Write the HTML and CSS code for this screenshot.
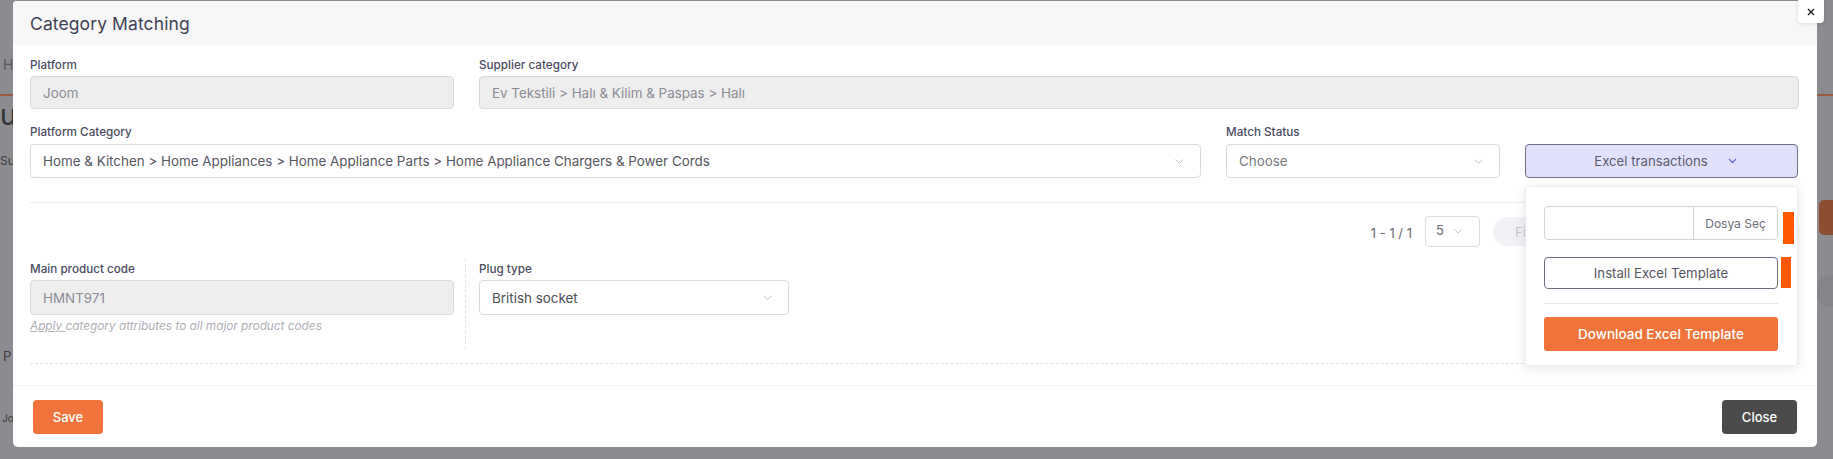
FILE: index.html
```html
<!DOCTYPE html>
<html lang="en">
<head>
<meta charset="utf-8">
<title>Category Matching</title>
<link rel="stylesheet" href="styles.css">
</head>
<body>
<div class="page-behind">
  <div class="pb-tabline"></div>
  <span class="pb-h">H</span>
  <span class="pb-up">up</span>
  <span class="pb-su">Su</span>
  <span class="pb-p">P</span>
  <span class="pb-jo">Jo</span>
  <div class="pb-block"></div>
  <div class="pb-circle"></div>
</div>

<div class="modal">
  <button class="modal-x" type="button" aria-label="close">
    <svg width="8" height="8" viewBox="0 0 8 8"><path d="M1 1L7 7M7 1L1 7" stroke="#222" stroke-width="1.4" fill="none"/></svg>
  </button>
  <div class="modal-header">
    <h2 class="modal-title">Category Matching</h2>
  </div>

  <div class="modal-body">
    <div class="row row-1">
      <div class="field">
        <label class="lbl">Platform</label>
        <div class="input disabled">Joom</div>
      </div>
      <div class="field">
        <label class="lbl">Supplier category</label>
        <div class="input disabled">Ev Tekstili &gt; Halı &amp; Kilim &amp; Paspas &gt; Halı</div>
      </div>
    </div>

    <div class="row row-2">
      <div class="field">
        <label class="lbl">Platform Category</label>
        <div class="input select">
          <span>Home &amp; Kitchen &gt; Home Appliances &gt; Home Appliance Parts &gt; Home Appliance Chargers &amp; Power Cords</span>
          <svg class="chev" width="9" height="5" viewBox="0 0 9 5"><path d="M0.5 0.5L4.5 4.5L8.5 0.5" stroke="#c4c4cc" stroke-width="1" fill="none"/></svg>
        </div>
      </div>
      <div class="field">
        <label class="lbl">Match Status</label>
        <div class="input select">
          <span>Choose</span>
          <svg class="chev" width="9" height="5" viewBox="0 0 9 5"><path d="M0.5 0.5L4.5 4.5L8.5 0.5" stroke="#c4c4cc" stroke-width="1" fill="none"/></svg>
        </div>
      </div>
      <div class="field excel-wrap">
        <label class="lbl">&nbsp;</label>
        <button class="excel-btn" type="button">
          <span>Excel transactions</span>
          <svg width="9" height="6" viewBox="0 0 9 6"><path d="M1 1L4.5 4.5L8 1" stroke="#6a6ad8" stroke-width="1.3" fill="none"/></svg>
        </button>
        <div class="excel-menu">
          <div class="menu-row">
            <div class="file-input">
              <span class="file-name"></span>
              <span class="file-btn">Dosya Seç</span>
            </div>
            <span class="orange-bar bar-1"></span>
          </div>
          <div class="menu-row row-gap">
            <button class="install-btn" type="button">Install Excel Template</button>
            <span class="orange-bar bar-2"></span>
          </div>
          <div class="menu-sep"></div>
          <button class="download-btn" type="button">Download Excel Template</button>
        </div>
      </div>
    </div>

    <div class="hr"></div>

    <div class="pager">
      <span class="pager-info">1 - 1 / 1</span>
      <div class="pager-size">
        <span>5</span>
        <svg width="8" height="5" viewBox="0 0 8 5"><path d="M0.5 0.5L4 4L7.5 0.5" stroke="#c4c4cc" stroke-width="1" fill="none"/></svg>
      </div>
      <span class="pager-pill">Filter</span>
      <span class="pager-pill pill-2">Search</span>
    </div>

    <div class="row row-3">
      <div class="col col-main">
        <label class="lbl">Main product code</label>
        <div class="input disabled">HMNT971</div>
        <p class="hint"><u>Apply </u>category attributes to all major product codes</p>
      </div>
      <div class="col col-attr">
        <label class="lbl">Plug type</label>
        <div class="input select plug">
          <span class="dark">British socket</span>
          <svg class="chev" width="9" height="5" viewBox="0 0 9 5"><path d="M0.5 0.5L4.5 4.5L8.5 0.5" stroke="#c4c4cc" stroke-width="1" fill="none"/></svg>
        </div>
      </div>
    </div>

    <div class="dashed-hr"></div>
  </div>

  <div class="modal-footer">
    <button class="btn btn-save" type="button">Save</button>
    <button class="btn btn-close" type="button">Close</button>
  </div>
</div>
</body>
</html>
```

FILE: styles.css
```css
* { box-sizing: border-box; }

html, body {
  margin: 0;
  padding: 0;
}

body {
  width: 1833px;
  height: 459px;
  overflow: hidden;
  background: #8a8c90;
  font-family: "Inter", "Open Sans", sans-serif;
  position: relative;
}

/* page behind the overlay */
.page-behind {
  position: absolute;
  inset: 0;
  color: #3c3d40;
}
.pb-tabline {
  position: absolute;
  left: 0; right: 0; top: 94px;
  height: 2px;
  background: #9c5a3c;
}
.pb-h { position: absolute; left: 3px; top: 56px; font-size: 14px; color: #55575b; }
.pb-up { position: absolute; left: 0; top: 98px; font-size: 28px; color: #303134; }
.pb-su { position: absolute; left: 0; top: 153px; font-size: 12px; color: #3a3b3e; }
.pb-p { position: absolute; left: 3px; top: 348px; font-size: 13px; color: #3a3b3e; }
.pb-jo { position: absolute; left: 2px; top: 412px; font-size: 10px; color: #3a3b3e; }
.pb-block {
  position: absolute;
  left: 1819px; top: 200px;
  width: 14px; height: 35px;
  border-radius: 5px 0 0 5px;
  background: #8c4e33;
}
.pb-circle {
  position: absolute;
  left: 1815px; top: 275px;
  width: 32px; height: 32px;
  border-radius: 50%;
  background: #838589;
}

/* modal */
.modal {
  position: absolute;
  left: 13px;
  top: 1px;
  width: 1804px;
  height: 446px;
  background: #fff;
  border-radius: 4px 4px 5px 5px;
  display: flex;
  flex-direction: column;
}

.modal-x {
  position: absolute;
  right: -7px;
  top: -1px;
  width: 26px;
  height: 23px;
  border: 0;
  padding: 0;
  background: #fff;
  border-radius: 0 0 4px 4px;
  box-shadow: 0 1px 4px rgba(0,0,0,0.12);
  display: flex;
  align-items: center;
  justify-content: center;
  z-index: 5;
}

.modal-header {
  height: 44px;
  flex: none;
  background: #f7f7f7;
  border-radius: 4px 4px 0 0;
  display: flex;
  align-items: center;
  padding-left: 17px;
}
.modal-title {
  margin: 0;
  font-size: 17.5px;
  font-weight: 400;
  color: #3f4156;
  letter-spacing: 0.1px;
}

.modal-body {
  flex: 1;
  padding: 12px 18px 0 17px;
}

.row { display: grid; }
.row-1 { grid-template-columns: 424px 1fr; column-gap: 25px; }
.row-2 { grid-template-columns: 1171px 274px 273px; column-gap: 25px; margin-top: 15px; }

.field { display: flex; flex-direction: column; }

.lbl {
  display: block;
  font-size: 11.7px;
  font-weight: 500;
  line-height: 16px;
  color: #4a4b5f;
  margin-bottom: 3px;
}
.row-2 .lbl { margin-bottom: 4px; }

.input {
  height: 33px;
  border: 1px solid #dadae2;
  border-radius: 4px;
  display: flex;
  align-items: center;
  padding: 0 12px;
  font-size: 13.4px;
  color: #6b6b74;
  background: #fff;
  white-space: nowrap;
}
.input.disabled {
  background: #eeeeee;
  color: #8b8b94;
}
.row-2 .input { height: 34px; }
.input.select { justify-content: space-between; color: #56565f; }
.input.select .chev { flex: none; margin-right: 4px; }
.row-2 .field:nth-child(2) .input { color: #7a7a82; }

/* excel dropdown */
.excel-wrap { position: relative; }
.excel-btn {
  height: 34px;
  border: 1px solid #6f6f82;
  border-radius: 4px;
  background: #e2e1fb;
  display: flex;
  align-items: center;
  justify-content: center;
  gap: 20px;
  font-family: inherit;
  font-size: 13.2px;
  color: #5c5c6e;
  padding: 0 0 0 8px;
}

.excel-menu {
  position: absolute;
  left: 0;
  top: 62px;
  width: 273px;
  height: 180px;
  background: #fff;
  border: 1px solid #ededf0;
  border-radius: 4px;
  box-shadow: 0 2px 12px rgba(0,0,0,0.10);
  padding: 19px 19px 18px 18px;
  z-index: 4;
}
.menu-row { display: flex; align-items: flex-start; }
.row-gap { margin-top: 13px; }

.file-input {
  width: 234px;
  height: 34px;
  flex: none;
  border: 1px solid #d3d3dc;
  border-radius: 4px;
  display: flex;
}
.file-name { flex: 1; }
.file-btn {
  width: 84px;
  border-left: 1px solid #d3d3dc;
  display: flex;
  align-items: center;
  justify-content: center;
  font-size: 12px;
  color: #6e6e78;
}
.orange-bar { display: block; background: #ff5800; flex: none; }
.bar-1 { width: 11px; height: 32px; margin-left: 5px; margin-top: 6px; }
.bar-2 { width: 10px; height: 31px; margin-left: 3px; }

.install-btn {
  width: 234px;
  height: 32px;
  flex: none;
  border: 1px solid #6c6c7e;
  border-radius: 4px;
  background: #fff;
  font-family: inherit;
  font-size: 13.2px;
  color: #55555f;
}
.menu-sep {
  width: 234px;
  margin-top: 14px;
  border-top: 1px solid #e6e6ea;
}
.download-btn {
  display: block;
  width: 234px;
  height: 34px;
  margin-top: 13px;
  border: 0;
  border-radius: 3px;
  background: #ef733a;
  color: #fff;
  font-family: inherit;
  font-size: 13.5px;
  font-weight: 500;
}

.hr {
  margin-top: 24px;
  border-top: 1px solid #ececf0;
}

/* pager */
.pager {
  margin-top: 13px;
  height: 31px;
  display: flex;
  justify-content: flex-end;
  align-items: center;
}
.pager-info {
  font-size: 13px;
  color: #6a6a74;
  margin-right: 13px;
  margin-top: 3px;
}
.pager-size {
  width: 55px;
  height: 31px;
  border: 1px solid #dcdce3;
  border-radius: 4px;
  display: flex;
  align-items: flex-start;
  padding: 5px 0 0 10px;
  gap: 10px;
  font-size: 13px;
  color: #6a6a74;
}
.pager-size svg { margin-top: 7px; }
.pager-pill {
  margin-left: 13px;
  height: 29px;
  width: 120px;
  border-radius: 15px;
  background: #f1f1f6;
  color: #c9c9d2;
  font-size: 13px;
  display: flex;
  align-items: center;
  padding-left: 22px;
}
.pill-2 { width: 176px; margin-left: 10px; }

/* attributes row */
.row-3 {
  display: flex;
  margin-top: 12px;
}
.col { display: flex; flex-direction: column; }
.col-main {
  width: 436px;
  padding: 2px 11px 16px 0;
  border-right: 1px dashed #e2e2e8;
}
.col-main .input { width: 424px; height: 35px; }
.col-attr { padding: 2px 0 0 13px; }
.input.plug { width: 310px; height: 35px; }
.input .dark { color: #4e4e57; }
.hint {
  margin: 4px 0 0;
  font-size: 11.8px;
  font-style: italic;
  color: #b0b0b8;
  line-height: 14px;
}
.hint u { text-decoration-color: #b0b0b8; }

.dashed-hr {
  margin-top: 14px;
  border-top: 1px dashed #dedef0;
}

/* footer */
.modal-footer {
  flex: none;
  height: 62px;
  border-top: 1px solid #f0f0f2;
  display: flex;
  justify-content: space-between;
  align-items: flex-start;
  padding: 14px 20px 0 20px;
}
.btn {
  height: 34px;
  border: 0;
  border-radius: 4px;
  font-family: inherit;
  font-size: 13px;
  font-weight: 500;
  color: #fff;
}
.btn-save { width: 70px; background: #ef733a; }
.btn-close { width: 75px; background: #4b4b4b; }
```
